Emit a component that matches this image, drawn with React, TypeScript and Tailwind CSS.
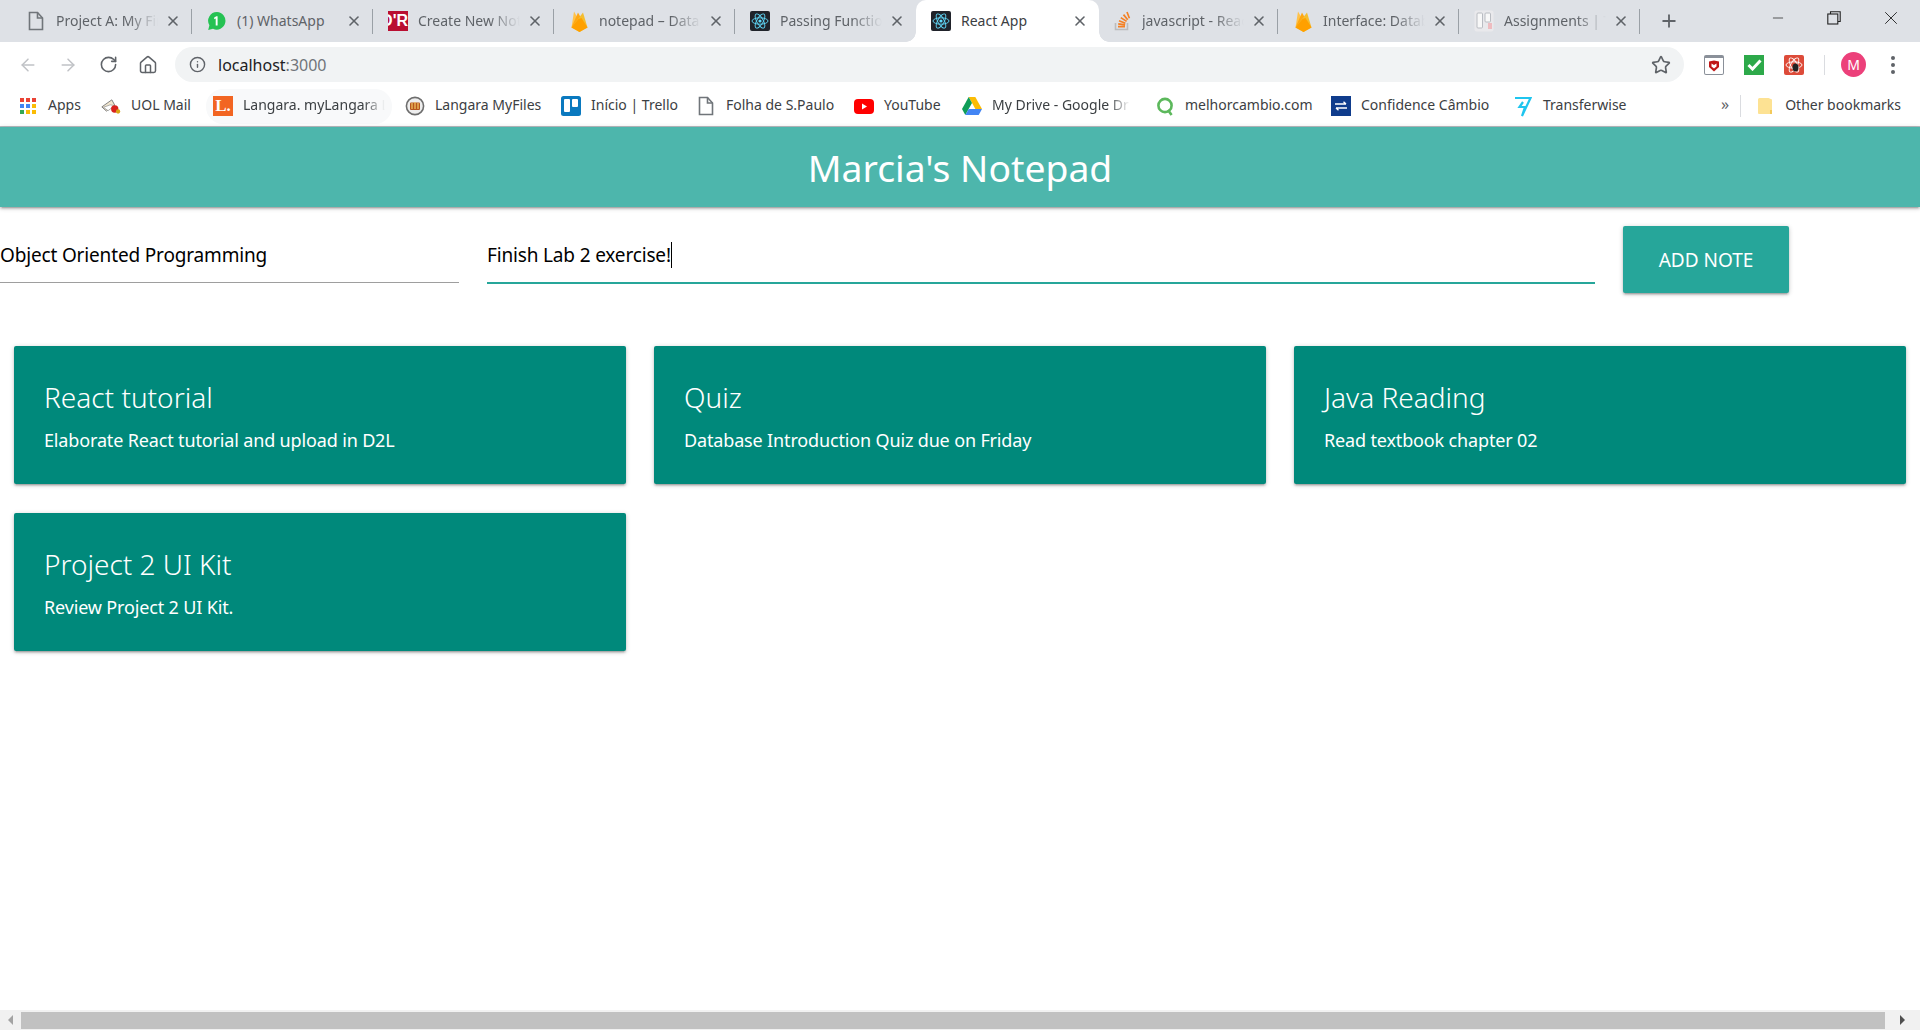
import React from "react";
import { X, Plus, ArrowLeft, ArrowRight, RotateCw, Home, Info, Star, Minus } from "lucide-react";

const DocIcon = ({ className = "" }: { className?: string }) => (
  <svg width="16" height="20" viewBox="0 0 16 20" className={className} fill="none" stroke="#70757a" strokeWidth="1.6">
    <path d="M1.5 1.5h8l5 5.5v11.5h-13z" />
    <path d="M9.5 1.5v5.5h5" />
  </svg>
);
const WhatsApp = () => (
  <svg width="20" height="20" viewBox="0 0 20 20">
    <path d="M10 1a8.8 8.8 0 0 0-7.6 13.3L1.2 19l4.8-1.2A8.8 8.8 0 1 0 10 1z" fill="#25c253" />
    <path d="M10.6 5.2v9.4H8.7V7.6l-1.5.7V6.5l2.2-1.3z" fill="#fff" />
  </svg>
);
const DR = () => (
  <div className="w-5 h-5 bg-[#b90e31] flex items-center justify-end overflow-hidden text-white font-bold text-[16px] leading-none font-['Liberation_Sans',sans-serif]">
    <span className="whitespace-nowrap">D'R</span>
  </div>
);
const Firebase = () => (
  <svg width="17" height="23" viewBox="0 0 17 23">
    <path d="M0.5 17.5 3 1.5l4 7z" fill="#ffc24a" />
    <path d="M0.5 17.5 10 8 7 2.5z" fill="#ffa712" />
    <path d="M0.5 17.5 12 2.5l4.5 15-8 4.5z" fill="#f4bd2f" />
    <path d="M0.5 17.5 7.5 9l3-1 6 9.5-8 4.5z" fill="#ffa000" />
  </svg>
);
const ReactIcon = () => (
  <svg width="20" height="20" viewBox="0 0 20 20">
    <rect width="20" height="20" rx="2" fill="#20232a" />
    <g fill="none" stroke="#61dafb" strokeWidth="0.9">
      <ellipse cx="10" cy="10" rx="8" ry="3.2" />
      <ellipse cx="10" cy="10" rx="8" ry="3.2" transform="rotate(60 10 10)" />
      <ellipse cx="10" cy="10" rx="8" ry="3.2" transform="rotate(120 10 10)" />
    </g>
    <circle cx="10" cy="10" r="1.6" fill="#61dafb" />
  </svg>
);
const StackOverflow = () => (
  <svg width="17" height="20" viewBox="0 0 17 20">
    <path d="M1.5 12v6.5h12V12" fill="none" stroke="#bcbbbb" strokeWidth="1.6" />
    <path d="M4 15.7h7M4.2 12.8l6.9 1.1M5 9.7l6.4 2.5M6.8 6.6l5.8 3.8M9.5 3.6l4.2 5.2M13 1l2.4 6.2" stroke="#f48024" strokeWidth="1.7" fill="none" />
  </svg>
);
const TrelloTab = () => (
  <svg width="20" height="22" viewBox="0 0 20 22">
    <rect x="0.5" y="0.5" width="19" height="21" rx="2" fill="#e9e9ec" />
    <rect x="3" y="3" width="5.5" height="15" rx="1" fill="#f8f8f8" stroke="#b9bcc2" />
    <rect x="11" y="3" width="5.5" height="9" rx="1" fill="#f8f8f8" stroke="#b9bcc2" />
    <rect x="14" y="13" width="4" height="6" fill="#eebcc0" />
  </svg>
);
const AppsIcon = () => (
  <svg width="16" height="16" viewBox="0 0 16 16">
    {[
      ["#ea4335", "#ea4335", "#ea4335"],
      ["#4285f4", "#4285f4", "#fbbc05"],
      ["#34a853", "#fbbc05", "#fbbc05"],
    ].map((r, y) => r.map((c, x) => <rect key={`${x}${y}`} x={x * 6} y={y * 6} width="4" height="4" fill={c} />))}
  </svg>
);
const UolIcon = () => (
  <svg width="24" height="19" viewBox="0 0 24 19">
    <path d="M1 10 13 1.5l3.5 6.5-10 7z" fill="#f1e6cf" stroke="#777" strokeWidth="1.1" />
    <path d="M3 10.5 11 7.5l5.5 1-8 6z" fill="#fff" stroke="#888" strokeWidth="0.8" />
    <circle cx="16.5" cy="12.5" r="4.4" fill="#d8211d" />
    <circle cx="20.5" cy="15.5" r="2.6" fill="#d9a514" />
  </svg>
);
const LangaraL = () => (
  <div className="w-5 h-5 bg-[#f26522] text-white font-bold text-[17px] leading-5 text-center font-['Liberation_Serif',serif]">L.</div>
);
const MyFiles = () => (
  <svg width="20" height="20" viewBox="0 0 20 20">
    <circle cx="10" cy="10" r="8.6" fill="#eeeeee" stroke="#6e6e6e" strokeWidth="1.6" />
    <rect x="5" y="6.5" width="10" height="7.5" rx="1" fill="#b5561d" />
    <path d="M7 7v6M10 6v7M13 7v6" stroke="#f0c060" strokeWidth="1.3" />
  </svg>
);
const TrelloBm = () => (
  <svg width="20" height="20" viewBox="0 0 20 20">
    <rect width="20" height="20" rx="2.5" fill="#0a79bf" />
    <rect x="3" y="3" width="6" height="13" rx="1" fill="#fff" />
    <rect x="11" y="3" width="6" height="8" rx="1" fill="#fff" />
  </svg>
);
const YouTube = () => (
  <svg width="20" height="15" viewBox="0 0 20 15">
    <rect width="20" height="15" rx="4" fill="#f00" />
    <path d="M8 4.5v6l5-3z" fill="#fff" />
  </svg>
);
const Drive = () => (
  <svg width="20" height="18" viewBox="0 0 20 18">
    <path d="M6.7 0h6.6L20 12h-6.6z" fill="#fbbc05" />
    <path d="M6.7 0 0 12l3.3 6 6.7-12z" fill="#0f9d58" />
    <path d="M6.7 12H20l-3.3 6H3.3z" fill="#4285f4" />
  </svg>
);
const QIcon = () => (
  <svg width="18" height="19" viewBox="0 0 18 19" fill="none" stroke="#5cb85c" strokeWidth="2.6">
    <circle cx="9" cy="8.5" r="6.6" />
    <path d="m12 13 3.6 5" />
  </svg>
);
const Confidence = () => (
  <div className="w-5 h-5 bg-[#0f3c8c] flex items-center justify-center">
    <svg width="14" height="10" viewBox="0 0 14 10" fill="none" stroke="#fff" strokeWidth="1.4">
      <path d="M1 3h11M9.5 0.8 12 3M13 7H2M4.5 9.2 2 7" />
    </svg>
  </div>
);
const Transferwise = () => (
  <svg width="18" height="21" viewBox="0 0 18 21" fill="none" stroke="#1fc5ef" strokeWidth="2.2">
    <path d="M1 2h15.5L8 20l3-9H5.5L9 6" />
  </svg>
);
const Folder = () => (
  <svg width="16" height="18" viewBox="0 0 16 18">
    <path d="M1 2.5A1.5 1.5 0 0 1 2.5 1h9l3.5 1.5V16a1 1 0 0 1-1 1H2a1 1 0 0 1-1-1z" fill="#fde293" />
    <rect x="13" y="13" width="2" height="4" fill="#f3c95a" />
  </svg>
);

const tabs = [
  { title: "Project A: My Final Project", icon: <DocIcon /> },
  { title: "(1) WhatsApp", icon: <WhatsApp />, full: true },
  { title: "Create New Note", icon: <DR /> },
  { title: "notepad – Database", icon: <Firebase /> },
  { title: "Passing Functions", icon: <ReactIcon />, nosep: true },
  { title: "React App", icon: <ReactIcon />, active: true, full: true },
  { title: "javascript - React", icon: <StackOverflow /> },
  { title: "Interface: Database", icon: <Firebase /> },
  { title: "Assignments | Trello", icon: <TrelloTab /> },
];

const bookmarks = [
  { label: "Apps", icon: <AppsIcon />, w: "w-[83px]" },
  { label: "UOL Mail", icon: <UolIcon />, w: "w-[105px]" },
  { label: "Langara. myLangara Login", icon: <LangaraL />, w: "w-[186px] mr-[13px] pl-[7px] bg-[#f8f9fa] rounded-[17px]", tw: "w-[142px]", fade: true },
  { label: "Langara MyFiles", icon: <MyFiles />, w: "w-[156px]" },
  { label: "Início | Trello", icon: <TrelloBm />, w: "w-[135px]" },
  { label: "Folha de S.Paulo", icon: <DocIcon />, w: "w-[158px]" },
  { label: "YouTube", icon: <YouTube />, w: "w-[108px]" },
  { label: "My Drive - Google Drive", icon: <Drive />, w: "w-[193px]", tw: "w-[138px]", fade: true },
  { label: "melhorcambio.com", icon: <QIcon />, w: "w-[176px]" },
  { label: "Confidence Câmbio", icon: <Confidence />, w: "w-[182px]" },
  { label: "Transferwise", icon: <Transferwise />, w: "w-[132px]" },
];

const notes = [
  { title: "React tutorial", body: "Elaborate React tutorial and upload in D2L" },
  { title: "Quiz", body: "Database Introduction Quiz due on Friday" },
  { title: "Java Reading", body: "Read textbook chapter 02" },
  { title: "Project 2 UI Kit", body: "Review Project 2 UI Kit." },
];

const cardShadow =
  "shadow-[0_2px_2px_0_rgba(0,0,0,0.14),0_3px_1px_-2px_rgba(0,0,0,0.12),0_1px_5px_0_rgba(0,0,0,0.2)]";

export default function App() {
  return (
    <div className="h-screen w-full overflow-hidden flex flex-col bg-white font-['Noto_Sans',sans-serif]">
      {/* Tab strip */}
      <div className="h-[42px] shrink-0 bg-[#dee1e6] flex pl-[11px] relative">
        {tabs.map((t) =>
          t.active ? (
            <div key={t.title} className="w-[183px] -mr-[2px] h-[42px] relative z-10 flex items-center pl-[15px] bg-white rounded-t-[10px] shrink-0">
              <span className="absolute -left-[10px] bottom-0 w-[10px] h-[10px] bg-[radial-gradient(circle_at_0_0,transparent_9.5px,white_10px)]" />
              <span className="absolute -right-[10px] bottom-0 w-[10px] h-[10px] bg-[radial-gradient(circle_at_100%_0,transparent_9.5px,white_10px)]" />
              <span className="w-5 flex justify-center shrink-0">{t.icon}</span>
              <span className="ml-[10px] w-[110px] pb-[2px] overflow-hidden whitespace-nowrap text-[14px] text-[#3c4043]">{t.title}</span>
              <X size={16} strokeWidth={2.4} className="ml-[1px] text-[#5f6368]" />
            </div>
          ) : (
            <div key={t.title} className="w-[181px] h-[42px] relative flex items-center pl-[15px] shrink-0">
              <span className="w-5 flex justify-center shrink-0">{t.icon}</span>
              <span
                className={
                  t.full
                    ? "ml-[10px] w-[102px] pb-[2px] overflow-hidden whitespace-nowrap text-[14px] text-[#5f6368]"
                    : "ml-[10px] w-[102px] pb-[2px] overflow-hidden whitespace-nowrap text-[14px] text-[#5f6368] [mask-image:linear-gradient(to_right,black_70%,transparent)]"
                }
              >
                {t.title}
              </span>
              <X size={16} strokeWidth={2.4} className="ml-[7px] text-[#5f6368]" />
              {!t.nosep && <span className="absolute right-0 top-[9px] h-[25px] w-px bg-[#9aa0a6]" />}
            </div>
          )
        )}
        <div className="ml-[7px] w-[44px] h-[42px] flex items-center justify-center shrink-0">
          <Plus size={20} strokeWidth={2.2} className="text-[#5f6368]" />
        </div>
        <div className="ml-auto flex items-start text-[#222]">
          <div className="w-[56px] h-[36px] flex items-center justify-center">
            <Minus size={16} strokeWidth={1.1} />
          </div>
          <div className="w-[56px] h-[36px] flex items-center justify-center">
            <svg width="14" height="14" viewBox="0 0 14 14" fill="none" stroke="#222" strokeWidth="1.1">
              <rect x="0.8" y="3" width="10" height="10" />
              <path d="M3.5 3V0.8h9.7v9.7H11" />
            </svg>
          </div>
          <div className="w-[58px] h-[36px] flex items-center justify-center">
            <X size={22} strokeWidth={1} />
          </div>
        </div>
      </div>

      {/* Address row */}
      <div className="h-[45px] shrink-0 flex items-center pl-[8px] bg-white">
        <div className="w-[40px] flex justify-center">
          <ArrowLeft size={20} strokeWidth={1.8} className="text-[#c0c2c6]" />
        </div>
        <div className="w-[40px] flex justify-center">
          <ArrowRight size={20} strokeWidth={1.8} className="text-[#c0c2c6]" />
        </div>
        <div className="w-[40px] flex justify-center">
          <RotateCw size={19} strokeWidth={2} className="text-[#5f6368]" />
        </div>
        <div className="w-[40px] flex justify-center">
          <Home size={20} strokeWidth={1.8} className="text-[#5f6368]" />
        </div>
        <div className="ml-[7px] w-[1509px] h-[35px] rounded-[18px] bg-[#f1f3f4] flex items-center pl-[14px] pr-[13px]">
          <Info size={17} strokeWidth={2} className="text-[#5f6368]" />
          <span className="ml-[12px] text-[16px] text-[#202124]">
            localhost<span className="text-[#70757a]">:3000</span>
          </span>
          <Star size={20} strokeWidth={2} className="ml-auto text-[#5f6368]" />
        </div>
        <div className="ml-[10px] w-[40px] flex justify-center">
          <div className="w-5 h-5 border border-[#8a9099] border-t-[3px] rounded-[2px] bg-white flex items-center justify-center">
            <svg width="12" height="12" viewBox="0 0 12 12">
              <path d="M1 1.5 6 .5l5 1V7L6 11.5 1 7z" fill="#c01818" />
              <path d="M3.5 3.5 6 5l2.5-1.5V6.5L6 8.5l-2.5-2z" fill="#fff" />
            </svg>
          </div>
        </div>
        <div className="w-[40px] flex justify-center">
          <div className="w-5 h-5 bg-[#2da94a] flex items-center justify-center">
            <svg width="15" height="12" viewBox="0 0 15 12" fill="none" stroke="#fff" strokeWidth="3">
              <path d="m1.5 6 4 4 8-8.5" />
            </svg>
          </div>
        </div>
        <div className="w-[40px] flex justify-center">
          <svg width="20" height="20" viewBox="0 0 20 20">
            <rect width="20" height="20" rx="2" fill="#dd4b39" />
            <g fill="none" stroke="#fff" strokeWidth="0.9">
              <ellipse cx="10" cy="10" rx="8" ry="3.2" />
              <ellipse cx="10" cy="10" rx="8" ry="3.2" transform="rotate(60 10 10)" />
              <ellipse cx="10" cy="10" rx="8" ry="3.2" transform="rotate(120 10 10)" />
            </g>
            <ellipse cx="11.5" cy="12.5" rx="3" ry="4" fill="#222" />
          </svg>
        </div>
        <span className="ml-[10px] w-px h-[20px] bg-[#dadce0]" />
        <div className="ml-[16px] w-[25px] h-[25px] rounded-full bg-[#ec407a] text-white text-[14px] flex items-center justify-center">M</div>
        <div className="ml-[25px] flex flex-col gap-[3px]">
          <span className="w-[4px] h-[4px] rounded-full bg-[#5f6368]" />
          <span className="w-[4px] h-[4px] rounded-full bg-[#5f6368]" />
          <span className="w-[4px] h-[4px] rounded-full bg-[#5f6368]" />
        </div>
      </div>

      {/* Bookmarks */}
      <div className="h-[40px] pb-[1px] shrink-0 flex items-center pl-[18px] border-b border-[#b8bcc0] bg-white text-[14px] text-[#3c4043]">
        {bookmarks.map((b) => (
          <div key={b.label} className={`h-[35px] flex items-center shrink-0 ${b.w}`}>
            <span className="w-5 flex justify-center shrink-0">{b.icon}</span>
            <span
              className={
                b.fade
                  ? `ml-[10px] pb-[4px] overflow-hidden whitespace-nowrap [mask-image:linear-gradient(to_right,black_85%,transparent)] ${b.tw}`
                  : "ml-[10px] pb-[4px] whitespace-nowrap"
              }
            >
              {b.label}
            </span>
          </div>
        ))}
        <span className="ml-[76px] pb-[4px] text-[16px] text-[#5f6368]">»</span>
        <span className="ml-[11px] w-px h-[22px] bg-[#dadce0]" />
        <span className="ml-[14px] w-5 flex justify-center"><Folder /></span>
        <span className="ml-[10px] pb-[4px] whitespace-nowrap">Other bookmarks</span>
      </div>

      {/* Page */}
      <div className="flex-1 min-h-0 bg-white">
        <header className={`h-[80px] pt-[1px] bg-[#4db6ac] flex items-center justify-center text-white text-[37.3px] ${cardShadow}`}>
          Marcia's Notepad
        </header>
        <div className="pt-[19px] flex items-start">
          <div className="w-[459px] h-[57px] pt-[2px] border-b border-[#9e9e9e] flex items-center text-[19px] tracking-[-0.16px] text-black">
            Object Oriented Programming
          </div>
          <div className="ml-[28px] w-[1108px] h-[58px] pt-[2px] border-b-2 border-[#26a69a] flex items-center text-[19px] tracking-[-0.16px] text-black">
            Finish Lab 2 exercise!
            <span className="w-px h-[26px] bg-black" />
          </div>
          <button className={`ml-[28px] w-[166px] h-[67px] pt-[2px] bg-[#26a69a] text-white text-[19px] rounded-[2px] ${cardShadow}`}>
            ADD NOTE
          </button>
        </div>
        <div className="grid grid-cols-3 gap-x-[28px] gap-y-[29px] px-[14px] pt-[53px]">
          {notes.map((n) => (
            <div key={n.title} className={`h-[138px] bg-[#00897b] rounded-[2px] pl-[30px] pt-[31px] text-white ${cardShadow}`}>
              <div className="text-[28px] font-light leading-[40px]">{n.title}</div>
              <div className="mt-[10px] text-[18px] tracking-[-0.15px] leading-[26px]">{n.body}</div>
            </div>
          ))}
        </div>
      </div>

      {/* Horizontal scrollbar */}
      <div className="h-[20px] shrink-0 bg-[#f1f1f1] flex items-center">
        <div className="w-[21px] flex justify-center">
          <span className="w-0 h-0 border-y-[5px] border-y-transparent border-r-[5px] border-r-[#a3a3a3]" />
        </div>
        <div className="w-[1864px] h-[17px] bg-[#c1c1c1]" />
        <div className="flex-1 flex justify-center">
          <span className="w-0 h-0 border-y-[5px] border-y-transparent border-l-[5px] border-l-[#505050]" />
        </div>
      </div>
    </div>
  );
}
